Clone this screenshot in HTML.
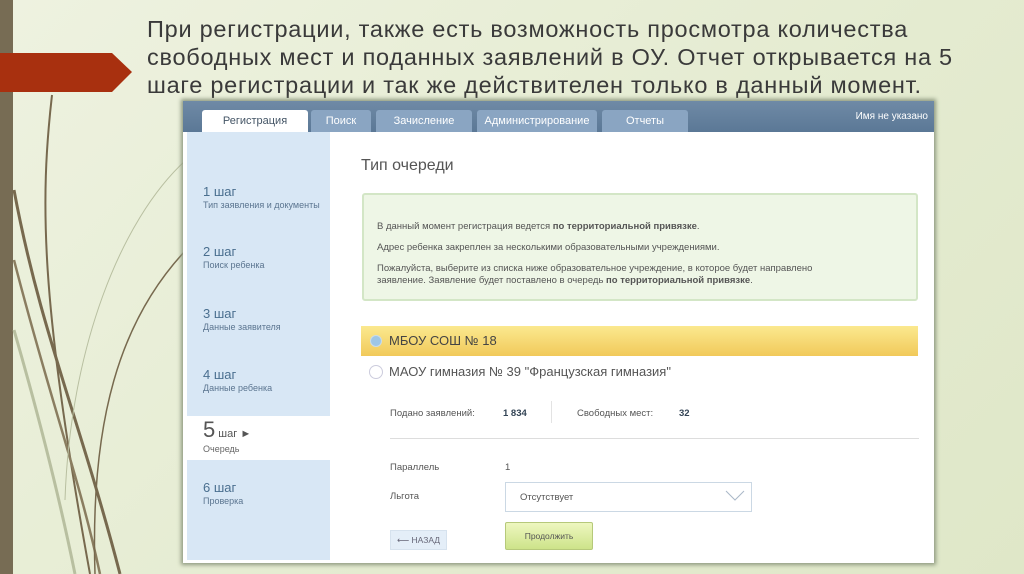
<!DOCTYPE html>
<html><head><meta charset="utf-8"><style>
*{margin:0;padding:0;box-sizing:border-box}
body{width:1024px;height:574px;overflow:hidden;position:relative;background:linear-gradient(135deg,#eef2e0 0%,#e4ebd0 60%,#dfe7c8 100%);font-family:"Liberation Sans","DejaVu Sans",sans-serif}
.abs{position:absolute}
.title{left:147px;top:15px;font-size:23.5px;line-height:28px;color:#3a3a3a;letter-spacing:0.75px;white-space:nowrap}
.frame{left:183px;top:101px;width:751px;height:462px;background:#fff;box-shadow:0 0 4px 2px #8f9a80}
.nav{left:0;top:0;width:751px;height:31px;background:linear-gradient(#6f8aa6,#5b7896)}
.tab{position:absolute;top:9px;height:22px;background:#8aa5c2;color:#fff;font-size:11px;text-align:center;line-height:22px;border-radius:3px 3px 0 0}
.side{left:4px;top:31px;width:143px;height:428px;background:#d8e7f5}
.st{position:absolute;left:16px;color:#4a6f8f;font-size:13px}
.st small{display:block;font-size:9px;color:#5b7590;margin-top:1px}
.c{color:#555;font-size:9.5px}
</style></head><body>
<div class="abs" style="left:0;top:0;width:13px;height:574px;background:#776c54"></div>
<svg class="abs" style="left:0;top:0" width="340" height="574">
<polygon points="0,53 112,53 132,72 112,92 0,92" fill="#a8300f"/>
<path d="M52,95 C40,200 40,300 90,574" stroke="#77694e" stroke-width="2" fill="none"/>
<path d="M14,190 C40,330 80,420 120,574" stroke="#77694e" stroke-width="3" fill="none"/>
<path d="M14,260 C50,400 80,480 100,574" stroke="#8a7d60" stroke-width="2.5" fill="none"/>
<path d="M186,250 C120,320 90,420 95,574" stroke="#77694e" stroke-width="1.5" fill="none"/>
<path d="M186,160 C120,220 70,350 65,500" stroke="#b8bfa0" stroke-width="1" fill="none"/>
<path d="M14,330 C40,420 60,500 75,574" stroke="#b8bfa0" stroke-width="3" fill="none"/>
</svg>
<div class="abs title">При регистрации, также есть возможность просмотра количества<br>свободных мест и поданных заявлений в ОУ. Отчет открывается на 5<br>шаге регистрации и так же действителен только в данный момент.</div>
<div class="abs frame">
 <div class="abs nav">
  <div class="tab" style="left:19px;width:106px;background:#fff;color:#456;">Регистрация</div>
  <div class="tab" style="left:128px;width:60px">Поиск</div>
  <div class="tab" style="left:193px;width:96px">Зачисление</div>
  <div class="tab" style="left:294px;width:120px">Администрирование</div>
  <div class="tab" style="left:419px;width:86px">Отчеты</div>
  <div style="position:absolute;right:6px;top:10px;color:#fff;font-size:10px">Имя не указано</div>
 </div>
 <div class="abs side">
  <div class="st" style="top:52px">1 шаг<small>Тип заявления и документы</small></div>
  <div class="st" style="top:112px">2 шаг<small>Поиск ребенка</small></div>
  <div class="st" style="top:174px">3 шаг<small>Данные заявителя</small></div>
  <div class="st" style="top:235px">4 шаг<small>Данные ребенка</small></div>
  <div style="position:absolute;left:0;top:284px;width:143px;height:44px;background:#fff"></div>
  <div class="st" style="top:285px;color:#555;font-size:11px"><span style="font-size:22px">5</span> шаг ►<small style="color:#666">Очередь</small></div>
  <div class="st" style="top:348px">6 шаг<small>Проверка</small></div>
 </div>
 <div class="abs" style="left:178px;top:56px;font-size:16px;color:#555">Тип очереди</div>
 <div class="abs" style="left:179px;top:92px;width:556px;height:108px;background:#eef6e6;border:2px solid #d3e6c6;border-radius:3px;padding:26px 0 0 13px;font-size:9.5px;color:#555;line-height:12px">
  В данный момент регистрация ведется <b>по территориальной привязке</b>.<br><div style="height:9px"></div>Адрес ребенка закреплен за несколькими образовательными учреждениями.<div style="height:9px"></div>Пожалуйста, выберите из списка ниже образовательное учреждение, в которое будет направлено<br>заявление. Заявление будет поставлено в очередь <b>по территориальной привязке</b>.
 </div>
 <div class="abs" style="left:178px;top:225px;width:557px;height:30px;background:linear-gradient(#fbe98f,#f1c95a)"></div>
 <div class="abs" style="left:187px;top:234px;width:12px;height:12px;border-radius:50%;background:#9ec6e6;border:1px solid #c9dcea"></div>
 <div class="abs" style="left:206px;top:232px;font-size:13px;color:#444">МБОУ СОШ № 18</div>
 <div class="abs" style="left:186px;top:264px;width:14px;height:14px;border-radius:50%;border:1px solid #ccd;background:#fff"></div>
 <div class="abs" style="left:206px;top:263px;font-size:13px;color:#555">МАОУ гимназия № 39 "Французская гимназия"</div>
 <div class="abs c" style="left:207px;top:307px">Подано заявлений:</div>
 <div class="abs c" style="left:320px;top:307px;color:#345;font-weight:bold">1 834</div>
 <div class="abs" style="left:368px;top:300px;width:1px;height:22px;background:#e3e3e3"></div>
 <div class="abs c" style="left:394px;top:307px">Свободных мест:</div>
 <div class="abs c" style="left:496px;top:307px;color:#345;font-weight:bold">32</div>
 <div class="abs" style="left:207px;top:337px;width:529px;height:1px;background:#ddd"></div>
 <div class="abs c" style="left:207px;top:361px">Параллель</div>
 <div class="abs c" style="left:322px;top:361px">1</div>
 <div class="abs c" style="left:207px;top:390px">Льгота</div>
 <div class="abs" style="left:322px;top:381px;width:247px;height:30px;border:1px solid #cbd8e4;background:#fff"></div>
 <div class="abs c" style="left:337px;top:391px">Отсутствует</div>
 <svg class="abs" style="left:542px;top:389px" width="20" height="12"><path d="M1,1 L10,10 L19,1" stroke="#aab8c8" fill="none"/></svg>
 <div class="abs" style="left:207px;top:429px;width:57px;height:20px;background:#e4eef8;border:1px solid #d6e2ee;font-size:8.5px;color:#667;line-height:18px;text-align:center">⟵ НАЗАД</div>
 <div class="abs" style="left:322px;top:421px;width:88px;height:28px;background:linear-gradient(#eef7bf,#cde38a);border:1px solid #b6c97a;border-radius:2px;font-size:8.5px;color:#555;line-height:26px;text-align:center">Продолжить</div>
</div>
</body></html>
